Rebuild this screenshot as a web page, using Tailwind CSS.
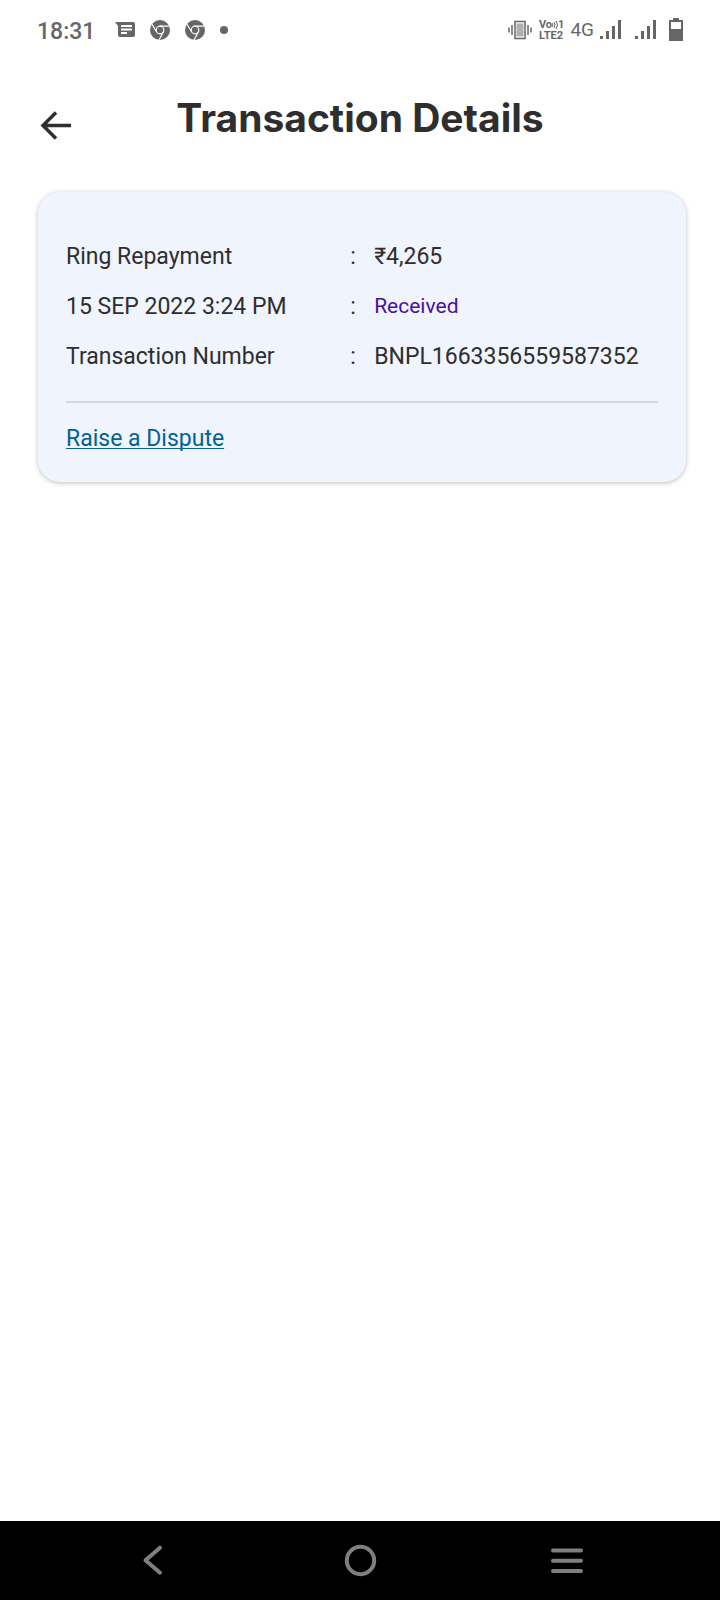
<!DOCTYPE html>
<html lang="en">
<head>
<meta charset="UTF-8">
<title>Transaction Details</title>
<meta name="viewport" content="width=device-width,initial-scale=1">
<script src="https://cdn.jsdelivr.net/npm/@tailwindcss/browser@4"></script>
</head>
<body class="flex min-h-screen flex-col bg-white font-[Roboto,sans-serif] text-[#2e2e2e]">

  <!-- status bar -->
  <div class="flex h-[60px] items-center justify-between px-[37px] text-[#666]">
    <div class="flex items-center">
      <span class="pt-1 text-[23px] font-medium leading-8">18:31</span>
      <svg class="ml-5 h-5 w-5" viewBox="0 0 20 20" fill="currentColor" aria-hidden="true">
        <path d="M0 2h18q2 0 2 2v11q0 2-2 2H5q-2 0-2-2V6z"/>
        <path d="M6 6h11M6 9.500h11M6 13h6" stroke="#fff" stroke-width="1.800"/>
      </svg>
      <svg class="ml-[15px] h-5 w-5" viewBox="0 0 20 20" fill="none" stroke="#fff" stroke-width="1.200" aria-hidden="true">
        <circle cx="10" cy="10" r="10" fill="#666" stroke="none"/>
        <circle cx="10" cy="10" r="3.800"/>
        <path d="M10 6.200h9M6.700 12 2 4.200M13.300 12 9 20"/>
      </svg>
      <svg class="ml-[15px] h-5 w-5" viewBox="0 0 20 20" fill="none" stroke="#fff" stroke-width="1.200" aria-hidden="true">
        <circle cx="10" cy="10" r="10" fill="#666" stroke="none"/>
        <circle cx="10" cy="10" r="3.800"/>
        <path d="M10 6.200h9M6.700 12 2 4.200M13.300 12 9 20"/>
      </svg>
      <span class="ml-[15px] h-2 w-2 rounded-full bg-[#666]"></span>
    </div>
    <div class="flex items-center">
      <svg class="h-5 w-6" viewBox="0 0 24 20" fill="none" stroke="currentColor" aria-hidden="true">
        <rect x="7" y="1.500" width="10" height="17" stroke-width="1.500"/>
        <rect x="8.500" y="3.500" width="7" height="13" fill="#b0b0b0" stroke="none"/>
        <path d="M1 7.500v5M4 5v10M20 5v10M23 7.500v5" stroke-width="1.500"/>
      </svg>
      <span class="ml-[7px] flex flex-col text-[11px] font-bold leading-[11px]">
        <span class="flex items-center justify-between">Vo<svg class="h-2 w-[6px]" viewBox="0 0 6 8" fill="none" stroke="currentColor" aria-hidden="true"><path d="M0 2q2 2 0 4M2 1q2 3 0 6M4 0q3 4 0 8"/></svg>1</span>
        <span>LTE2</span>
      </span>
      <span class="ml-[6px] text-[19px] leading-8">4G</span>
      <svg class="ml-[6px] h-5 w-[21px]" viewBox="0 0 21 20" fill="currentColor" aria-hidden="true">
        <path d="M0 16h3v3H0zM6 11h3v8H6zM12 6h3v13h-3zM18 0h3v19h-3z"/>
      </svg>
      <svg class="ml-[14px] h-5 w-[21px]" viewBox="0 0 21 20" fill="currentColor" aria-hidden="true">
        <path d="M0 16h3v3H0zM6 11h3v8H6zM12 6h3v13h-3zM18 0h3v19h-3z"/>
      </svg>
      <svg class="ml-[13px] h-6 w-[14px]" viewBox="0 0 14 24" fill="currentColor" aria-hidden="true">
        <path d="M4 0h6v2h4v21H0V2h4z"/><path d="M2 4h10v7H2z" fill="#fff"/>
      </svg>
    </div>
  </div>

  <header class="grid h-[132px] grid-cols-[1fr_auto_1fr] items-start px-[38px] pt-[34px]">
    <button type="button" aria-label="Back" class="mt-4 h-8 w-9">
      <svg class="h-8 w-9" viewBox="0 0 36 32" fill="none" stroke="currentColor" stroke-width="3.500" aria-hidden="true">
        <path d="M33 15.500H5M18 2.500 5 15.500l13 13"/>
      </svg>
    </button>
    <h1 class="font-[Inter,sans-serif] text-[39px] font-bold leading-[48px]">Transaction Details</h1>
  </header>

  <main class="flex-1 pl-[38px] pr-[34px]">
    <section class="rounded-[22px] bg-[#eff4fd] px-7 pb-[27px] pt-10 shadow-[0_1px_5px_rgba(0,0,0,0.25)]">
      <table class="w-full table-fixed text-left text-[23px]">
        <colgroup><col class="w-[48%]"><col class="w-6"><col></colgroup>
        <tbody>
          <tr class="h-[50px]">
            <th scope="row" class="font-normal">Ring Repayment</th>
            <td>:</td>
            <td>₹4,265</td>
          </tr>
          <tr class="h-[50px]">
            <th scope="row" class="font-normal">15 SEP 2022 3:24 PM</th>
            <td>:</td>
            <td class="text-[21px] text-[#4a0fa3]">Received</td>
          </tr>
          <tr class="h-[50px]">
            <th scope="row" class="font-normal">Transaction Number</th>
            <td>:</td>
            <td>BNPL1663356559587352</td>
          </tr>
        </tbody>
      </table>
      <hr class="mt-[19px] border-t-2 border-[#d3d7e0]">
      <a href="#dispute" class="mt-5 inline-block text-[23px] leading-8 text-[#046195] underline decoration-1 underline-offset-2 [text-decoration-skip-ink:none]">Raise a Dispute</a>
    </section>
  </main>

  <!-- system navigation -->
  <nav class="flex h-[79px] items-center justify-between bg-black px-[135px] text-[#7f7f7f]">
    <button type="button" aria-label="Back">
      <svg class="h-9 w-9" viewBox="0 0 36 36" fill="none" stroke="currentColor" stroke-width="4" stroke-linecap="round" stroke-linejoin="round" aria-hidden="true"><path d="M25 4.700 10.500 17.200l14.500 12.500"/></svg>
    </button>
    <button type="button" aria-label="Home">
      <svg class="h-9 w-9" viewBox="0 0 36 36" fill="none" stroke="currentColor" stroke-width="4" aria-hidden="true"><circle cx="18.500" cy="17.500" r="13.700"/></svg>
    </button>
    <button type="button" aria-label="Recent apps">
      <svg class="h-9 w-9" viewBox="0 0 36 36" fill="none" stroke="currentColor" stroke-width="4" stroke-linecap="round" aria-hidden="true"><path d="M4 7.500h28M4 17.700h28M4 28h28"/></svg>
    </button>
  </nav>
</body>
</html>
